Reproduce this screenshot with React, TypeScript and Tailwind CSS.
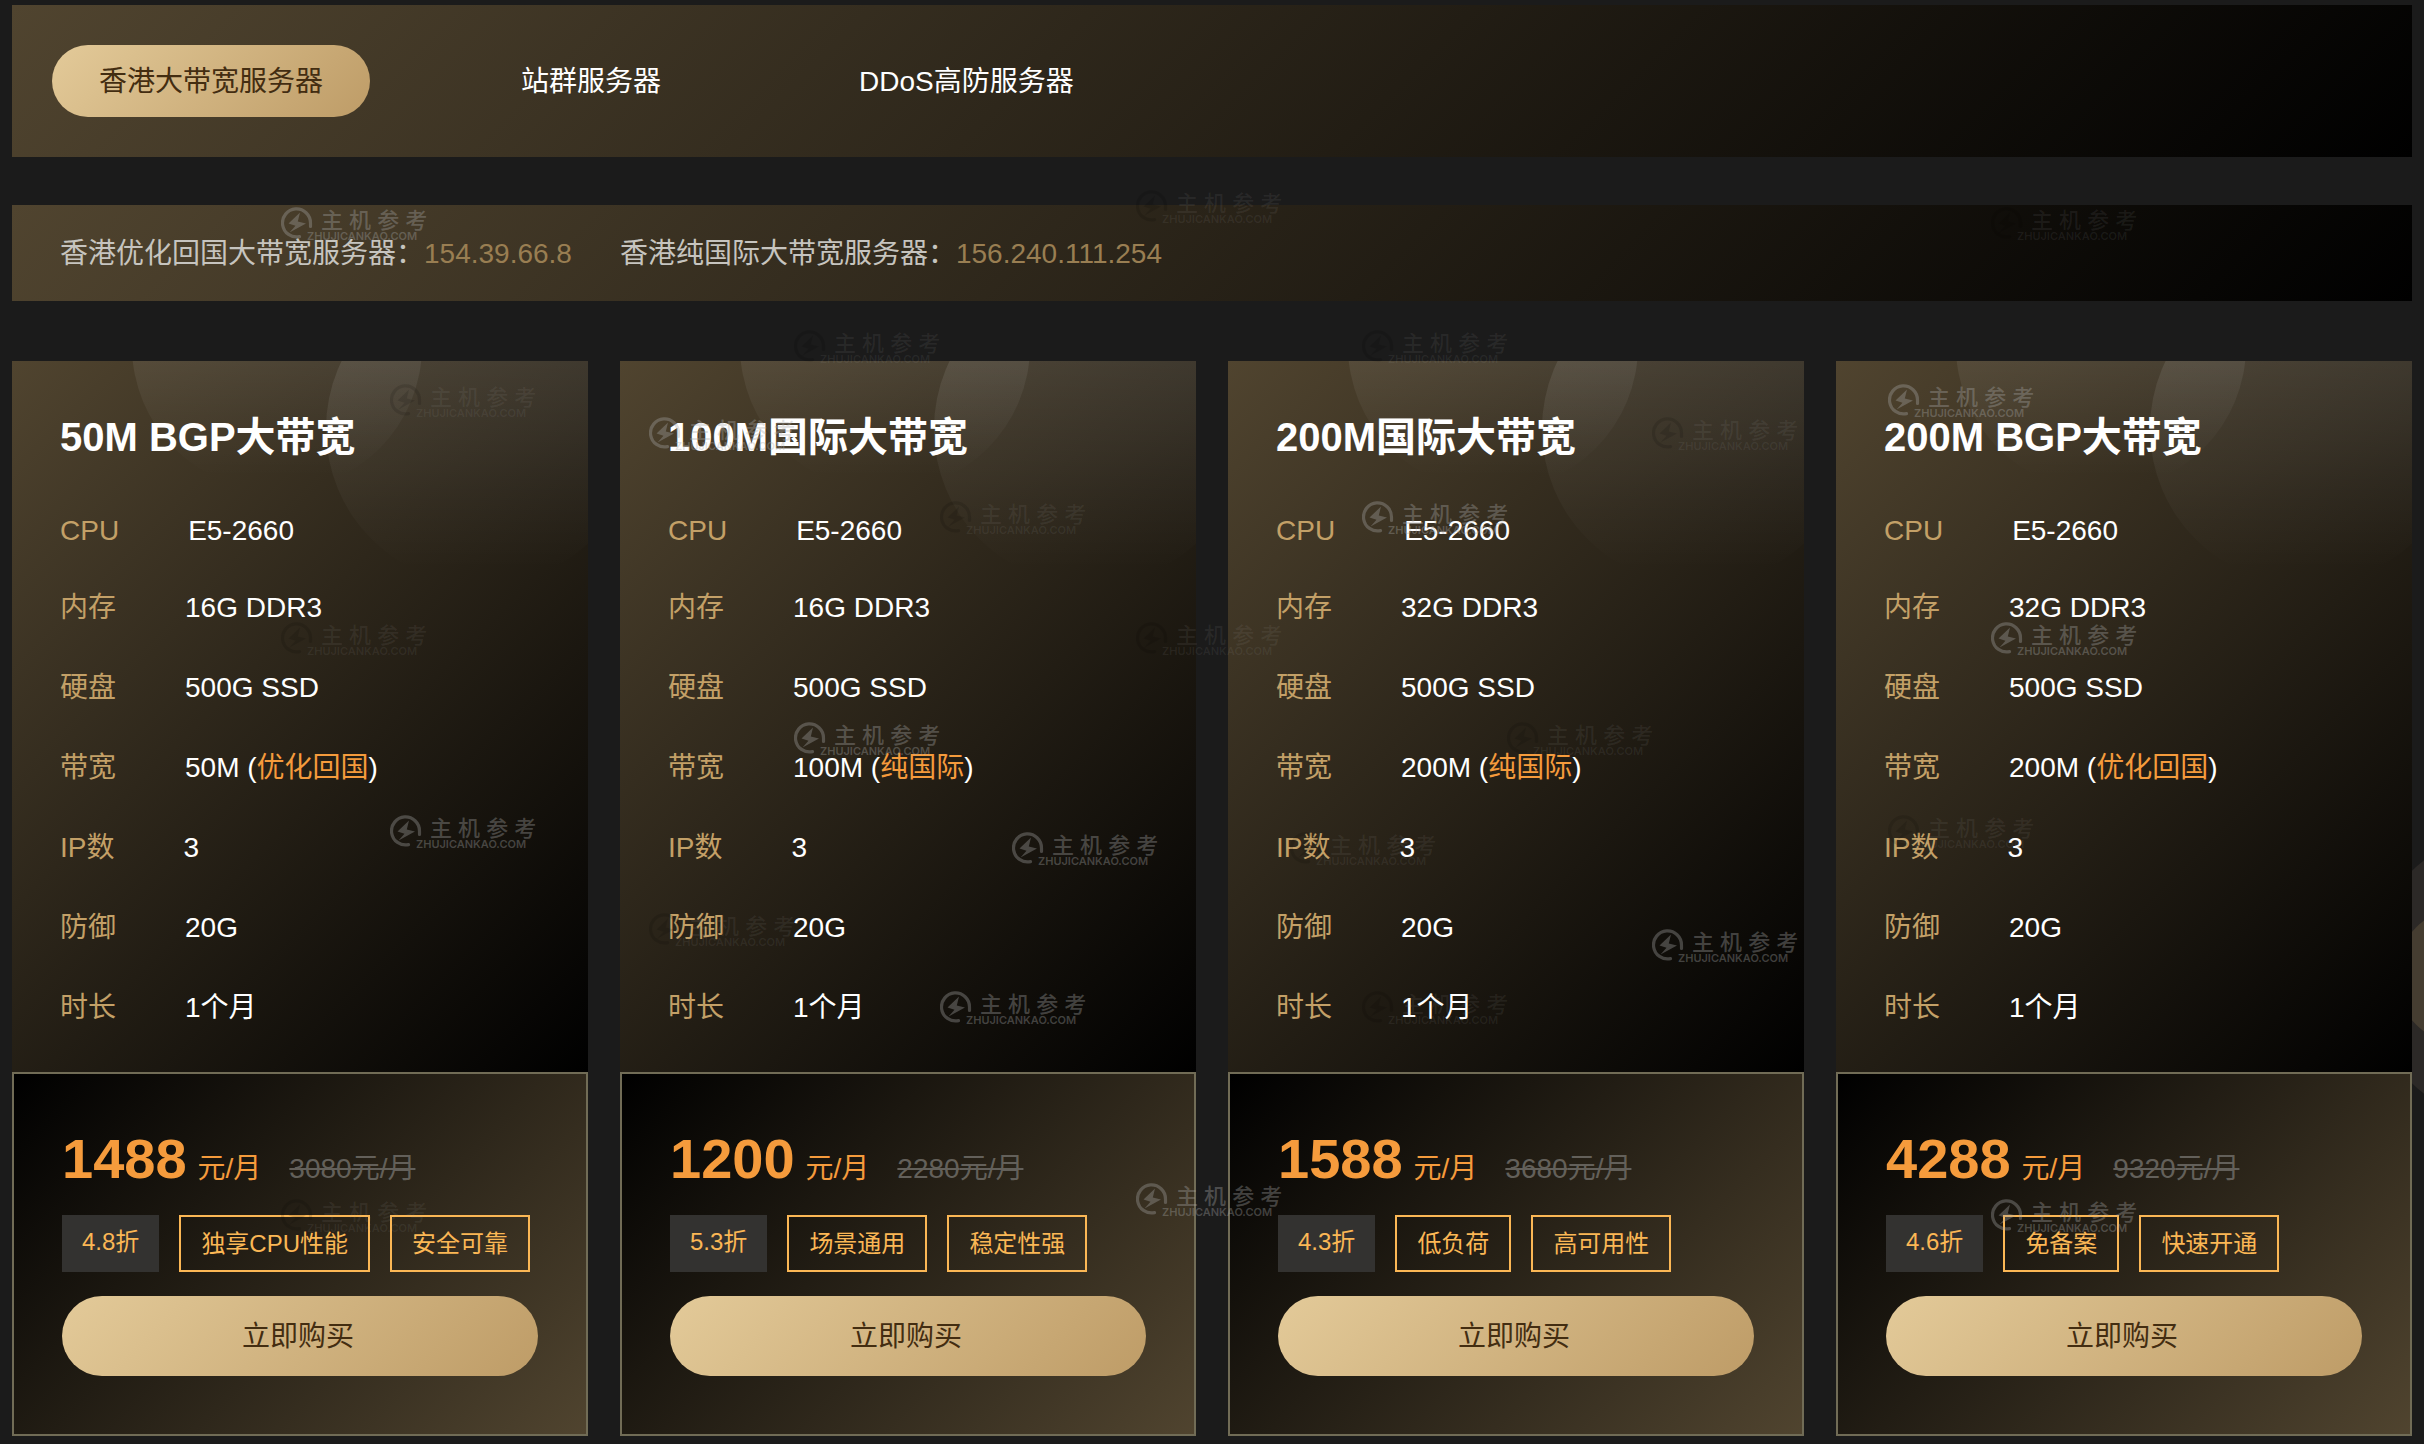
import { clsx } from "clsx";

type Plan = {
  name: string;
  memory: string;
  bandwidth: string;
  route: string;
  price: string;
  oldPrice: string;
  discount: string;
  tags: string[];
};

const tabs = ["香港大带宽服务器", "站群服务器", "DDoS高防服务器"];

const testIps = [
  { label: "香港优化回国大带宽服务器：", ip: "154.39.66.8" },
  { label: "香港纯国际大带宽服务器：", ip: "156.240.111.254" },
];

const plans: Plan[] = [
  {
    name: "50M BGP大带宽",
    memory: "16G DDR3",
    bandwidth: "50M",
    route: "优化回国",
    price: "1488",
    oldPrice: "3080",
    discount: "4.8折",
    tags: ["独享CPU性能", "安全可靠"],
  },
  {
    name: "100M国际大带宽",
    memory: "16G DDR3",
    bandwidth: "100M",
    route: "纯国际",
    price: "1200",
    oldPrice: "2280",
    discount: "5.3折",
    tags: ["场景通用", "稳定性强"],
  },
  {
    name: "200M国际大带宽",
    memory: "32G DDR3",
    bandwidth: "200M",
    route: "纯国际",
    price: "1588",
    oldPrice: "3680",
    discount: "4.3折",
    tags: ["低负荷", "高可用性"],
  },
  {
    name: "200M BGP大带宽",
    memory: "32G DDR3",
    bandwidth: "200M",
    route: "优化回国",
    price: "4288",
    oldPrice: "9320",
    discount: "4.6折",
    tags: ["免备案", "快速开通"],
  },
];

// Watermarks scattered over the page, in a bright and a faint version
const brightMarks = [
  "left-[281px] top-[207px]",
  "left-[649px] top-[417px]",
  "left-[1362px] top-[501px]",
  "left-[1888px] top-[384px]",
  "left-[1991px] top-[622px]",
  "left-[794px] top-[722px]",
  "left-[390px] top-[815px]",
  "left-[1012px] top-[832px]",
  "left-[1652px] top-[929px]",
  "left-[940px] top-[991px]",
  "left-[1136px] top-[1183px]",
  "left-[1991px] top-[1199px]",
];

const faintMarks = [
  "left-[1136px] top-[190px]",
  "left-[1991px] top-[207px]",
  "left-[390px] top-[384px]",
  "left-[794px] top-[330px]",
  "left-[1362px] top-[330px]",
  "left-[940px] top-[501px]",
  "left-[1652px] top-[417px]",
  "left-[281px] top-[622px]",
  "left-[1136px] top-[622px]",
  "left-[1507px] top-[722px]",
  "left-[1290px] top-[832px]",
  "left-[1888px] top-[815px]",
  "left-[649px] top-[913px]",
  "left-[1362px] top-[991px]",
  "left-[281px] top-[1199px]",
];

function Watermark({ place, faint }: { place: string; faint?: boolean }) {
  return (
    <div
      className={clsx(
        "absolute flex h-8 w-[146px] whitespace-nowrap",
        faint ? "text-[#aaaaaa]/10" : "text-[#aaaaaa]/35",
        place,
      )}
    >
      <svg
        viewBox="0 0 32 32"
        className={clsx("h-8 w-8 shrink-0", faint && "text-black/12")}
        fill="none"
      >
        <path
          d="M29.5 19.500V16A14 14 0 1 0 18.500 29.6"
          stroke="currentColor"
          strokeWidth="3.2"
          strokeLinecap="round"
          strokeLinejoin="round"
        />
        <path
          d="M19 5.500 7.500 16.500l7 2.200-6 6.800L25 16.500l-8.200-2z"
          fill="currentColor"
        />
      </svg>
      <div className="-ml-1.5 flex flex-col pt-1">
        <span className="ml-3.5 text-[22px] leading-[20px] font-medium">
          主 机 参 考
        </span>
        <span className="font-[family-name:Inter] text-[11px] leading-[10px] font-semibold">
          ZHUJICANKAO.COM
        </span>
      </div>
    </div>
  );
}

function PlanCard({ plan }: { plan: Plan }) {
  const specs = [
    { label: "CPU", value: "E5-2660" },
    { label: "内存", value: plan.memory },
    { label: "硬盘", value: "500G SSD" },
    { label: "带宽", value: plan.bandwidth, route: plan.route },
    { label: "IP数", value: "3" },
    { label: "防御", value: "20G" },
    { label: "时长", value: "1个月" },
  ];

  return (
    <article className="relative">
      {/* Specs */}
      <div className="relative overflow-hidden bg-linear-135/srgb from-[#50442f] to-black px-12 pt-[46px] pb-6">
        <div className="absolute -top-40 left-[120px] size-[290px] rounded-full bg-linear-to-b/srgb from-white/8 from-50% to-white/0 to-95%" />
        <div className="absolute -top-[88px] left-[314px] size-[312px] rounded-full bg-linear-to-b/srgb from-white/10 from-20% to-white/0 to-95%" />

        <h2 className="relative mb-[27px] text-[40px] leading-[60px] font-bold">
          {plan.name}
        </h2>
        <dl className="relative text-[28px]">
          {specs.map((spec) => (
            <div
              key={spec.label}
              className="flex gap-[69px] leading-[80px] first:leading-[74px]"
            >
              <dt className="text-[#c3a067]">{spec.label}</dt>
              <dd>
                {spec.value}
                {spec.route && (
                  <>
                    {" "}
                    (<span className="text-[#f59b3c]">{spec.route}</span>)
                  </>
                )}
              </dd>
            </div>
          ))}
        </dl>
      </div>

      {/* Price */}
      <div className="border-2 border-[#716c56] bg-linear-135/srgb from-black to-[#50442f] px-12 pt-[53px] pb-[58px]">
        <div className="flex items-baseline text-[28px] text-[#f59b3c]">
          <strong className="text-[56px] leading-[64px]">{plan.price}</strong>
          <span className="ml-[11px]">元/月</span>
          <del className="ml-7 text-[#63605a]">{plan.oldPrice}元/月</del>
        </div>
        <div className="mt-6 flex gap-5 text-[24px] leading-[53px] text-[#fbb755]">
          <span className="bg-[#333230] px-5">{plan.discount}</span>
          {plan.tags.map((tag) => (
            <span key={tag} className="border-2 border-[#fbb755] px-5">
              {tag}
            </span>
          ))}
        </div>
        <button
          type="button"
          className="mt-6 h-20 w-full rounded-full bg-linear-135/srgb from-[#e3ca99] to-[#be9c67] pt-0.5 pr-1 text-[28px] text-[#432d11]"
        >
          立即购买
        </button>
      </div>
    </article>
  );
}

export default function App() {
  return (
    <main className="relative min-h-screen overflow-hidden bg-[#1b1b1b] px-3 pt-[5px] pb-2 font-['Liberation_Sans','Noto_Sans_CJK_SC',sans-serif] text-white">
      {/* Background circles at the right edge */}
      <div className="absolute top-[829px] -right-[239px] size-[296px] rounded-full bg-[#2c2927]" />
      <div className="absolute top-[907px] -right-[110px] size-[138px] rounded-full bg-[#453d31]" />

      <nav className="relative flex items-center gap-[104px] bg-linear-135/srgb from-[#50442f] to-black px-10 py-10 text-[28px]">
        {tabs.map((tab, i) => (
          <button
            key={tab}
            type="button"
            className={clsx(
              "h-[72px] rounded-full px-[47px] pt-0.5",
              i === 0 &&
                "bg-linear-135/srgb from-[#e3ca99] to-[#be9c67] text-[#432d11]",
            )}
          >
            {tab}
          </button>
        ))}
      </nav>

      <section className="relative mt-12 flex gap-12 bg-linear-135/srgb from-[#50442f] to-black px-12 pt-0.5 text-[28px] leading-[94px] text-[#c6c4bf]">
        {testIps.map((item) => (
          <p key={item.ip}>
            {item.label}
            <span className="text-[#997e52]">{item.ip}</span>
          </p>
        ))}
      </section>

      <section className="mt-[60px] grid grid-cols-4 gap-8">
        {plans.map((plan) => (
          <PlanCard key={plan.name} plan={plan} />
        ))}
      </section>

      <div aria-hidden="true" className="pointer-events-none absolute inset-0">
        {brightMarks.map((place) => (
          <Watermark key={place} place={place} />
        ))}
        {faintMarks.map((place) => (
          <Watermark key={place} place={place} faint />
        ))}
      </div>
    </main>
  );
}
